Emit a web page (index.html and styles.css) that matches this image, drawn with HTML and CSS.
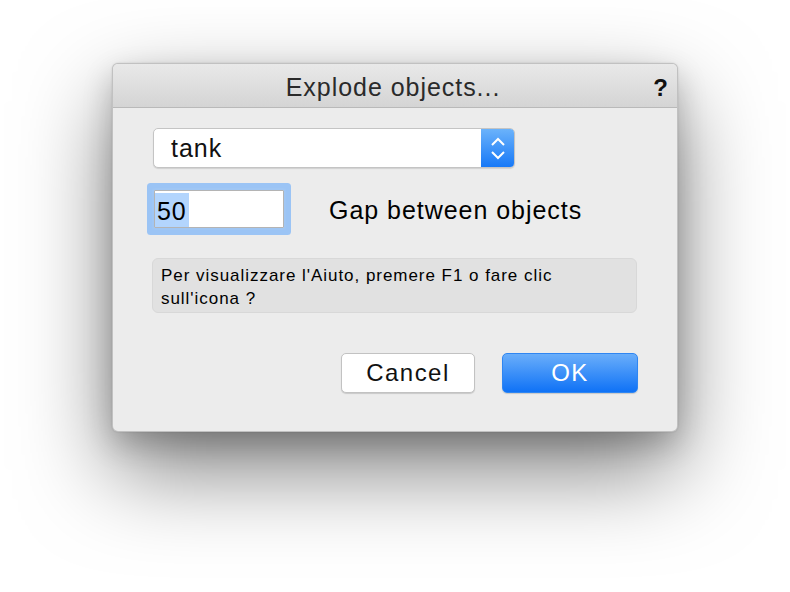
FILE: index.html
```html
<!DOCTYPE html>
<html lang="en">
<head>
    <meta charset="UTF-8">
    <meta name="viewport" content="width=device-width, initial-scale=1.0">
    <title>Explode objects...</title>
    <link rel="stylesheet" href="styles.css">
</head>
<body>
    <div class="window">
        <div class="titlebar">
            <span class="title">Explode objects...</span>
            <span class="help">?</span>
        </div>
        <div class="content">
            <!-- object picker -->
            <div class="popup">
                <span class="popup-value">tank</span>
                <span class="popup-arrows">
                    <svg width="16" height="24" viewBox="0 0 16 24">
                        <path d="M2 9 L8 3 L14 9" fill="none" stroke="#fff" stroke-width="2"/>
                        <path d="M2 16 L8 22 L14 16" fill="none" stroke="#fff" stroke-width="2"/>
                    </svg>
                </span>
            </div>

            <div class="gap-row">
                <div class="field"><span class="selected">50</span></div>
                <label class="gap-label">Gap between objects</label>
            </div>

            <div class="info">Per visualizzare l'Aiuto, premere F1 o fare clic sull'icona ?</div>

            <div class="buttons">
                <button class="btn">Cancel</button>
                <button class="btn btn-default">OK</button>
            </div>
        </div>
    </div>
</body>
</html>
```

FILE: styles.css
```css
body {
    margin: 0;
    background-color: #fff;
    font-family: "Liberation Sans", Arial, sans-serif;
    letter-spacing: 0.06em;
    height: 592px;
    overflow: hidden;
}

.window {
    margin: 63px 0 0 112px;
    width: 566px;
    height: 369px;
    box-sizing: border-box;
    background-color: #ececec;
    border: 1px solid rgba(0, 0, 0, 0.18);
    border-radius: 6px;
    box-shadow: 0 38px 90px rgba(0, 0, 0, 0.5), 0 12px 30px rgba(0, 0, 0, 0.2), 0 0 2px rgba(0, 0, 0, 0.15);
    overflow: hidden;
}

.titlebar {
    height: 44px;
    box-sizing: border-box;
    background: linear-gradient(#e9e9e9, #d4d4d4);
    border-bottom: 1px solid #b9b9b9;
    display: flex;
    align-items: center;
    justify-content: center;
    position: relative;
}

.title {
    font-size: 25px;
    color: #2a2a2a;
    margin: 4px 0 0 -4px;
}

.help {
    position: absolute;
    right: 9px;
    top: 10px;
    font-size: 24px;
    font-weight: bold;
    color: #111;
    letter-spacing: 0;
}

.content {
    padding: 20px 40px 0 40px;
}

.popup {
    width: 362px;
    height: 40px;
    box-sizing: border-box;
    background-color: #fff;
    border: 1px solid #c4c4c4;
    border-radius: 5px;
    box-shadow: 0 1px 1px rgba(0, 0, 0, 0.12);
    display: flex;
    align-items: center;
    justify-content: space-between;
    overflow: hidden;
}

.popup-value {
    font-size: 25px;
    padding-left: 17px;
    color: #111;
}

.popup-arrows {
    width: 33px;
    height: 40px;
    background: linear-gradient(#6db4fb, #1577f7);
    display: flex;
    align-items: center;
    justify-content: center;
}

.gap-row {
    display: flex;
    align-items: center;
    margin-top: 22px;
}

.field {
    width: 130px;
    height: 38px;
    box-sizing: border-box;
    margin-left: 1px;
    background-color: #fff;
    border: 1px solid #b4b4b4;
    box-shadow: 0 0 0 2px #9fc6f4, 0 0 0 7px #9bc4f5;
    border-radius: 1px;
    display: flex;
    align-items: flex-end;
    font-size: 25px;
}

.selected {
    background-color: #b3d5fd;
    padding: 4px 2px 2px 2px;
    color: #000;
    line-height: 28px;
}

.gap-label {
    font-size: 25px;
    margin: 3px 0 0 45px;
    color: #000;
}

.info {
    margin-top: 30px;
    width: 485px;
    height: 55px;
    box-sizing: border-box;
    margin-left: -1px;
    padding: 5px 8px;
    background-color: #e1e1e1;
    border: 1px solid #d8d8d8;
    border-radius: 6px;
    font-size: 17px;
    line-height: 23px;
    color: #000;
}

.buttons {
    display: flex;
    justify-content: flex-end;
    gap: 27px;
    margin-top: 40px;
    width: 485px;
}

.btn {
    width: 134px;
    height: 40px;
    box-sizing: border-box;
    font-family: "Liberation Sans", Arial, sans-serif;
    letter-spacing: 0.06em;
    font-size: 24px;
    color: #111;
    background-color: #fff;
    border: 1px solid #c2c2c2;
    border-radius: 5px;
    box-shadow: 0 1px 1px rgba(0, 0, 0, 0.15);
    cursor: pointer;
}

.btn-default {
    width: 136px;
    color: #fff;
    background: linear-gradient(#6aaefa, #0f72f6);
    border: 1px solid #2f86f2;
}
```
